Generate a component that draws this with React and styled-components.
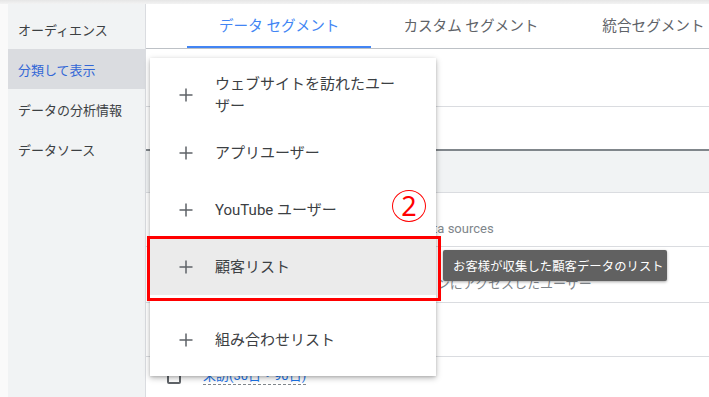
import React from "react";
import styled, { createGlobalStyle, css } from "styled-components";

const GlobalStyle = createGlobalStyle`
  html, body { margin: 0; padding: 0; background: #ffffff; }
  body { font-family: Roboto, "Noto Sans CJK JP", sans-serif; }
  * { box-sizing: border-box; }
`;

const Page = styled.div`
  position: relative;
  width: 709px;
  height: 397px;
  overflow: hidden;
  display: flex;
  flex-direction: column;
  background: #ffffff;
`;

const TopStrip = styled.div`
  height: 4px;
  flex: none;
  background: linear-gradient(#e6e6e6, #f3f3f3);
`;

const Body = styled.div`
  flex: 1;
  display: flex;
  min-height: 0;
`;

const Gutter = styled.div`
  width: 8px;
  flex: none;
  background: #fafafa;
`;

const Sidebar = styled.nav`
  width: 138px;
  flex: none;
  background: #f1f3f4;
  border-right: 1px solid #dadce0;
  padding-top: 5px;
  display: flex;
  flex-direction: column;
`;

const NavItem = styled.div`
  height: 40px;
  display: flex;
  align-items: center;
  padding-left: 10px;
  font-size: 13px;
  color: #3c4043;
  ${(p) =>
    p.$active &&
    css`
      background: #dadce0;
      color: #3367d6;
    `}
`;

const Main = styled.main`
  flex: 1;
  display: flex;
  flex-direction: column;
  min-width: 0;
`;

const TabBar = styled.div`
  height: 45px;
  flex: none;
  display: flex;
  padding-left: 41px;
  border-bottom: 1px solid #bdc1c6;
  white-space: nowrap;
`;

const Tab = styled.div`
  position: relative;
  flex: none;
  display: flex;
  align-items: center;
  padding: 0 32px 4px;
  font-size: 14.6px;
  color: ${(p) => (p.$active ? "#4285f4" : "#5f6368")};
  ${(p) =>
    p.$active &&
    css`
      &::after {
        content: "";
        position: absolute;
        left: 0;
        right: 0;
        bottom: 0;
        height: 2px;
        background: #4285f4;
      }
    `}
`;

const Row = styled.div`
  flex: none;
  height: ${(p) => p.$h}px;
  border-bottom: ${(p) => p.$border || "1px solid #dadce0"};
  background: ${(p) => p.$bg || "transparent"};
  display: flex;
  flex-direction: column;
  padding: ${(p) => p.$pt || 0}px 0 0 57px;
  white-space: nowrap;
`;

const RowDesc = styled.div`
  font-size: 13px;
  color: #80868b;
  line-height: 15px;
`;

const CheckRow = styled.div`
  display: flex;
  align-items: center;
  padding: 11px 0 0 21px;
  gap: 22px;
`;

const Checkbox = styled.span`
  width: 14px;
  height: 14px;
  border: 2px solid #5f6368;
  border-radius: 2px;
  flex: none;
`;

const LinkText = styled.span`
  font-size: 13px;
  color: #1a73e8;
  line-height: 16px;
  border-bottom: 1px dashed #80868b;
`;

const Menu = styled.div`
  position: absolute;
  left: 150px;
  top: 58px;
  width: 286px;
  height: 318px;
  background: #ffffff;
  box-shadow: 0 2px 6px rgba(0, 0, 0, 0.28), 0 1px 2px rgba(0, 0, 0, 0.12);
  padding: 8px 0;
  display: flex;
  flex-direction: column;
`;

const MenuItem = styled.div`
  flex: none;
  min-height: 57px;
  display: flex;
  align-items: center;
  padding: 7px 0 7px 29px;
  margin-top: ${(p) => p.$mt || 0}px;
  background: ${(p) => (p.$hover ? "#ebebeb" : "transparent")};
`;

const PlusIcon = styled.svg`
  width: 14px;
  height: 14px;
  flex: none;
  margin-right: 22px;
`;

const MenuLabel = styled.span`
  font-size: 15px;
  line-height: 22px;
  color: #3c4043;
  max-width: 190px;
`;

const RedBox = styled.div`
  position: absolute;
  left: 147px;
  top: 236px;
  width: 294px;
  height: 65px;
  border: 3px solid #ff0000;
`;

const StepMark = styled.span`
  position: absolute;
  left: 392px;
  top: 190px;
  width: 34px;
  height: 32px;
  border: 1.5px solid #ff0000;
  border-radius: 50%;
  display: flex;
  align-items: center;
  justify-content: center;
  color: #ff0000;
  font-family: "Noto Sans", sans-serif;
  font-size: 27px;
  line-height: 1;
  padding-bottom: 1px;
`;

const Tooltip = styled.div`
  position: absolute;
  left: 443px;
  top: 250px;
  width: 224px;
  height: 31px;
  background: #616161;
  color: #ffffff;
  border-radius: 2px;
  box-shadow: 0 1px 3px rgba(0, 0, 0, 0.35);
  display: flex;
  align-items: center;
  padding-left: 10px;
  font-size: 12.3px;
  letter-spacing: 0.1px;
  white-space: nowrap;
`;

const Plus = () => (
  <PlusIcon viewBox="0 0 14 14">
    <path d="M7 0.5v13M0.5 7h13" stroke="#5f6368" strokeWidth="1.5" fill="none" />
  </PlusIcon>
);

const navItems = ["オーディエンス", "分類して表示", "データの分析情報", "データソース"];
const tabs = ["データ セグメント", "カスタム セグメント", "統合セグメント"];
const menuItems = [
  { label: "ウェブサイトを訪れたユーザー" },
  { label: "アプリユーザー" },
  { label: "YouTube ユーザー" },
  { label: "顧客リスト", hover: true },
  { label: "組み合わせリスト", mt: 16 },
];

export default function App() {
  return (
    <>
      <GlobalStyle />
      <Page>
        <TopStrip />
        <Body>
          <Gutter />
          <Sidebar>
            {navItems.map((n, i) => (
              <NavItem key={n} $active={i === 1}>
                {n}
              </NavItem>
            ))}
          </Sidebar>
          <Main>
            <TabBar>
              {tabs.map((t, i) => (
                <Tab key={t} $active={i === 0}>
                  {t}
                </Tab>
              ))}
            </TabBar>
            <Row $h={58} />
            <Row $h={44} $border="2px solid #80868b" />
            <Row $h={42} $bg="#f1f3f4" />
            <Row $h={54} $pt={28}>
              <RowDesc>Combined audiences from all of your data sources</RowDesc>
            </Row>
            <Row $h={56} $pt={29}>
              <RowDesc>お客様のウェブサイトやアプリケーションにアクセスしたユーザー</RowDesc>
            </Row>
            <Row $h={54} />
            <CheckRow>
              <Checkbox />
              <LinkText>来訪(30日・90日)</LinkText>
            </CheckRow>
          </Main>
        </Body>

        <Menu>
          {menuItems.map((m) => (
            <MenuItem key={m.label} $hover={m.hover} $mt={m.mt}>
              <Plus />
              <MenuLabel>{m.label}</MenuLabel>
            </MenuItem>
          ))}
        </Menu>

        <RedBox />
        <StepMark>2</StepMark>
        <Tooltip>お客様が収集した顧客データのリスト</Tooltip>
      </Page>
    </>
  );
}
